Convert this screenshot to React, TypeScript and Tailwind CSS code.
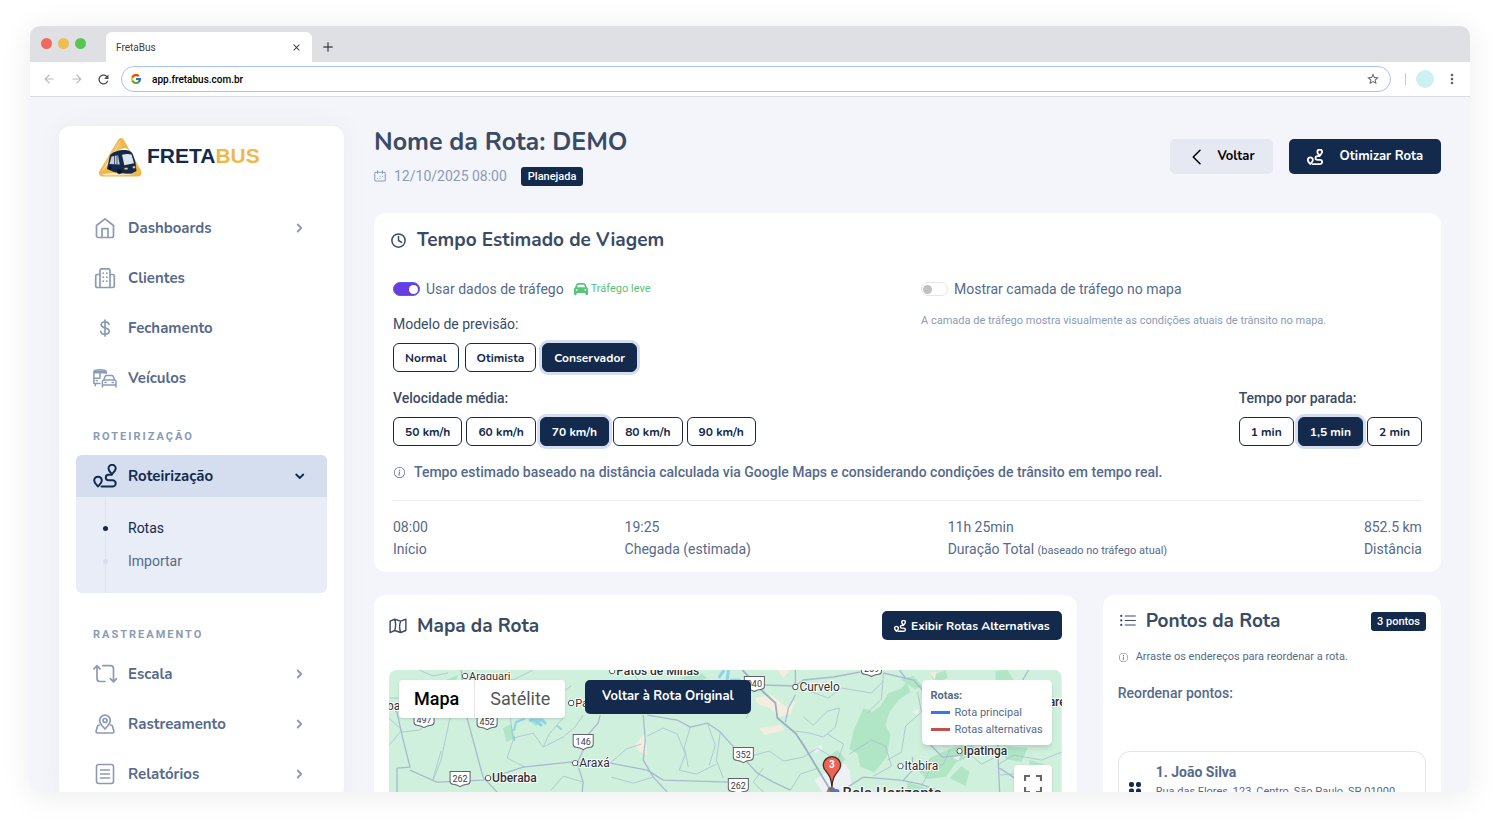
import { useState, type ReactNode } from "react";
import { BsInfoCircle, BsListUl } from "react-icons/bs";
import { FaCar } from "react-icons/fa6";
import { FcGoogle } from "react-icons/fc";
import {
  MdAdd,
  MdArrowBack,
  MdArrowForward,
  MdClose,
  MdMoreVert,
  MdRefresh,
  MdStarOutline,
} from "react-icons/md";

type IconProps = { className?: string };

function Stroke({
  className = "",
  width = 1.7,
  children,
}: IconProps & { width?: number; children: ReactNode }) {
  return (
    <svg
      viewBox="0 0 24 24"
      fill="none"
      stroke="currentColor"
      strokeWidth={width}
      strokeLinecap="round"
      strokeLinejoin="round"
      className={`shrink-0 ${className}`}
      aria-hidden="true"
    >
      {children}
    </svg>
  );
}

function RouteIcon({ className = "size-6", width = 2 }: IconProps & { width?: number }) {
  return (
    <Stroke className={className} width={width}>
      <path d="M5 22.500c-1.600-2-3.800-3.700-3.800-6a3.800 3.800 0 0 1 7.600 0c0 2.300-2.200 4-3.800 6Z" />
      <path d="M19 10.300c-1.300-2-3.500-3.700-3.500-5.900a3.600 3.600 0 0 1 7.200 0c0 2.200-2.400 3.900-3.700 5.900Z" />
      <path d="M18.500 10.800h-3a2.700 2.700 0 0 0 0 5.400h4a3.200 3.200 0 0 1 0 6.400H8.500" />
    </Stroke>
  );
}

function HomeIcon() {
  return (
    <Stroke className="size-6">
      <path d="M3.500 9.500 12 2.800l8.500 6.700v10.300a1.700 1.700 0 0 1-1.700 1.700H5.200a1.700 1.700 0 0 1-1.700-1.700Z" />
      <path d="M9 21.300v-8.600h6v8.600" />
    </Stroke>
  );
}

function BuildingIcon() {
  return (
    <Stroke className="size-6">
      <path d="M7 21.500V4.500a1.600 1.600 0 0 1 1.600-1.600h6.800A1.600 1.600 0 0 1 17 4.500v17M7 8.500H4.300a1.600 1.600 0 0 0-1.600 1.600v9.800a1.600 1.600 0 0 0 1.600 1.600h15.400a1.600 1.600 0 0 0 1.600-1.600v-9.800a1.600 1.600 0 0 0-1.600-1.600H17" />
      <path d="M10.200 7.200h.1M13.800 7.200h.1M10.200 11.200h.1M13.800 11.200h.1M10.200 15.200h.1M13.800 15.200h.1" />
    </Stroke>
  );
}

function DollarIcon() {
  return (
    <Stroke className="size-6" width={1.700}>
      <path d="M12 4v16M16 8.300C15.700 6.800 14.200 5.900 12 5.900c-2.300 0-3.900 1.100-3.900 2.900 0 4.200 8.100 2 8.100 6.300 0 1.900-1.700 3.100-4.200 3.100-2.400 0-4-1.100-4.300-2.900" />
    </Stroke>
  );
}

function VehiclesIcon() {
  return (
    <Stroke className="size-6" width={1.500}>
      <path d="M.900 17.500V5.500C2.500 3.300 11.500 3.300 13.300 5.500v1.800M.900 6.700h12.400M.900 12.200h6M7 6.700v4.600M.900 17.500h6M2.300 17.500v2.200M3.200 14.800h1" />
      <path d="M2.200 5.400h9.800" strokeWidth="1.800" />
      <path d="m10.700 14 1.500-3.700a1.500 1.500 0 0 1 1.400-.9h5.200a1.500 1.500 0 0 1 1.400.9l1.500 3.700M9.400 19v-3.400A1.600 1.600 0 0 1 11 14h10.400a1.600 1.600 0 0 1 1.600 1.600V19ZM9.400 19v2M23 19v2M12 16.500h1.200M19.200 16.500h1.200" />
    </Stroke>
  );
}

function ScaleIcon() {
  return (
    <Stroke className="size-6">
      <path d="M.900 6.800 4 3.700l3.100 3.100M4 4v12.500a3 3 0 0 0 3 3h5" />
      <path d="M9.800 3.700h7.700a3 3 0 0 1 3 3v13M17.300 16.700l3.200 3.100 3-3.100" />
    </Stroke>
  );
}

function PinMapIcon() {
  return (
    <Stroke className="size-6">
      <path d="M12 17c-2-2.500-5.300-5.100-5.300-8.600a5.300 5.300 0 0 1 10.600 0C17.300 11.900 14 14.500 12 17Z" />
      <circle cx="12" cy="8.500" r="2" />
      <path d="M6.500 13H6a1.500 1.500 0 0 0-1.400 1l-1.500 5a1.500 1.500 0 0 0 1.400 2h15a1.500 1.500 0 0 0 1.400-2l-1.500-5a1.500 1.500 0 0 0-1.400-1h-.5" />
    </Stroke>
  );
}

function ReportIcon() {
  return (
    <Stroke className="size-6" width={1.600}>
      <rect x="3.500" y="2.500" width="17" height="19" rx="2.200" />
      <path d="M7.500 8h9M7.500 12h9M7.500 16h9" />
    </Stroke>
  );
}

function ClockIcon() {
  return (
    <Stroke className="size-[15px]" width={2.400}>
      <circle cx="12" cy="12" r="10.600" />
      <path d="M12 5.500V12l5 3" />
    </Stroke>
  );
}

function FoldedMapIcon() {
  return (
    <Stroke className="size-[18px]" width={1.900}>
      <path d="M1.500 5.500 7.500 3l8 2.500L22.500 3v15l-7 2.700-8-2.700-6 2.700ZM7.500 3c1.800 5 1.800 10 0 15M15.500 5.500c-1.800 5-1.800 10 0 15" />
    </Stroke>
  );
}

function CalendarIcon() {
  return (
    <Stroke className="size-3" width={2.100}>
      <path d="M3.500 4.500h17A2 2 0 0 1 22.500 6.500V20a2 2 0 0 1-2 2h-17a2 2 0 0 1-2-2V6.500A2 2 0 0 1 3.500 4.500ZM7 1.500v5M17 1.500v5" />
      <path d="M12 12.500h.1M17 12.500h.1M7 17h.1M12 17h.1" strokeWidth="2.200" />
    </Stroke>
  );
}

function Chevron({ open = false }: { open?: boolean }) {
  return (
    <Stroke className="size-3" width={3.600}>
      {open ? <path d="m4.500 9 7 7 7-7" /> : <path d="m7.500 5 7 7-7 7" />}
    </Stroke>
  );
}

function Logo() {
  return (
    <a href="/" className="flex items-start gap-[5px]">
      <svg viewBox="0 0 44 40" className="h-10 w-11" aria-hidden="true">
        <path d="M20 3C21.500.200 24.500.200 26 3L43 33.500c1.500 3-.2 6-3.300 6H4.500C1.200 39.500.200 36.500 1.500 34Z" fill="#edb84c" />
        <path d="M22.500 4.500 24 9l-8 9L8 31l-6 4.500L7 26 18 7c1.800-2.800 3-3.500 4.500-2.500Z" fill="#f0c160" />
        <path d="M23.500 1.500 19 11l-8.500 15L4 34.500l5-7.700L16 15.500c3-5 5-9 7.500-14Z" fill="#fff" />
        <path d="M17 17c3-5 9-7 13-5l2 3-15 4Z" fill="#fff" />
        <path d="M12 18c4-4 14-6.500 20-3.800 3 1.300 3.500 5 5.500 11.300l1 8.500-5 2.500-13 .5L9 32Z" fill="#132a4d" />
        <path d="M13.500 19.500 20 18.300l1.700 9.200-10.200-.6Z" fill="#c6ced9" />
        <path d="M16.500 18.800v8.400M19 18.400v8.800" stroke="#132a4d" strokeWidth="0.7" />
        <path d="M24 17.800c4-.9 7-.9 9.500-.2l2.500 8.600-9.700 2Z" fill="#dde4ec" />
        <path d="m3.500 37 15-1.500 18 2.500-30 .6Z" fill="#f9e6b5" />
        <path d="M26.500 31.600h3.200M34.700 30.300h2.600" stroke="#ffc75a" strokeWidth="1.900" />
        <circle cx="21.500" cy="34.500" r="2.500" fill="#0a1629" />
        <circle cx="12" cy="30.800" r="1.800" fill="#0a1629" />
      </svg>
      <span className="mt-[7px] font-['Liberation_Sans',sans-serif] text-[21px] font-bold leading-6 text-[#132a4d]">
        FRETA<span className="text-[#edb84c]">BUS</span>
      </span>
    </a>
  );
}

const mainItems = [
  { label: "Dashboards", icon: <HomeIcon />, hasChildren: true },
  { label: "Clientes", icon: <BuildingIcon />, hasChildren: false },
  { label: "Fechamento", icon: <DollarIcon />, hasChildren: false },
  { label: "Veículos", icon: <VehiclesIcon />, hasChildren: false },
];

const trackingItems = [
  { label: "Escala", icon: <ScaleIcon />, hasChildren: true },
  { label: "Rastreamento", icon: <PinMapIcon />, hasChildren: true },
  { label: "Relatórios", icon: <ReportIcon />, hasChildren: true },
];

function NavItem({ label, icon, hasChildren }: (typeof mainItems)[number]) {
  return (
    <li>
      <a href="#" className="flex h-[50px] items-center gap-[11px] pl-[17px] pr-[21px] text-[#8a9bb8]">
        {icon}
        <span className="flex-1 font-['Nunito','Open_Sans',sans-serif] text-[15px] font-bold text-[#566a8c]">
          {label}
        </span>
        {hasChildren && <Chevron />}
      </a>
    </li>
  );
}

function Sidebar() {
  return (
    <aside className="w-[285px] shrink-0 rounded-xl bg-white px-[17px] shadow-[0_0_24px_rgba(80,100,150,0.06)]">
      <div className="h-[77px] pl-[22px] pt-[11px]">
        <Logo />
      </div>
      <nav>
        <ul>
          {mainItems.map((item) => (
            <NavItem key={item.label} {...item} />
          ))}
        </ul>

        <h2 className="mt-6 pl-[17px] text-[11px] font-bold uppercase leading-5 tracking-[2px] text-[#8a9bb8]">
          Roteirização
        </h2>
        <div className="mt-2 overflow-hidden rounded-md bg-[#e8edf7]">
          <button
            type="button"
            aria-expanded="true"
            className="flex h-[42px] w-full items-center gap-[11px] bg-[#d4deef] pl-[17px] pr-[21px] text-left text-[#132a4d]"
          >
            <RouteIcon />
            <span className="flex-1 font-['Nunito','Open_Sans',sans-serif] text-[15px] font-bold">
              Roteirização
            </span>
            <Chevron open />
          </button>
          <ul className="ml-[29px] border-l border-[#dce4f2] py-[15px] text-sm">
            <li className="relative pl-[22px] leading-[33px] text-[#132a4d]">
              <span className="absolute -left-[3px] top-3.5 size-[5px] rounded-full bg-[#132a4d]" />
              <a href="#">Rotas</a>
            </li>
            <li className="relative pl-[22px] leading-[33px] text-[#566a8c]">
              <span className="absolute -left-[3px] top-3.5 size-[5px] rounded-full bg-[#d4deef]" />
              <a href="#">Importar</a>
            </li>
          </ul>
        </div>

        <h2 className="mt-8 pl-[17px] text-[11px] font-bold uppercase leading-5 tracking-[2px] text-[#8a9bb8]">
          Rastreamento
        </h2>
        <ul className="mt-1">
          {trackingItems.map((item) => (
            <NavItem key={item.label} {...item} />
          ))}
        </ul>
      </nav>
    </aside>
  );
}

function ChoiceGroup({
  label,
  options,
  initial,
  gap,
}: {
  label: string;
  options: string[];
  initial: string;
  gap: string;
}) {
  const [selected, setSelected] = useState(initial);
  return (
    <div role="group" aria-label={label} className={`flex ${gap}`}>
      {options.map((option) => (
        <button
          key={option}
          type="button"
          aria-pressed={option === selected}
          onClick={() => setSelected(option)}
          className={`h-[29px] rounded-md border border-[#132a4d] px-[11px] font-['Nunito','Open_Sans',sans-serif] text-xs font-bold ${
            option === selected
              ? "bg-[#132a4d] text-white ring-3 ring-[#d4deef]"
              : "bg-white text-[#132a4d]"
          }`}
        >
          {option}
        </button>
      ))}
    </div>
  );
}

function Toggle({ id, label, on = false }: { id: string; label: string; on?: boolean }) {
  return (
    <>
      <input
        id={id}
        type="checkbox"
        role="switch"
        defaultChecked={on}
        className="flex h-3.5 w-[27px] appearance-none items-center rounded-full border border-[#e2e5ec] bg-white px-px before:size-[9px] before:rounded-full before:bg-[#bfc1c4] checked:justify-end checked:border-[#5a5cf0] checked:bg-[#6a3de0] checked:before:bg-white"
      />
      <label htmlFor={id} className="ml-1.5 text-sm text-[#566a8c]">
        {label}
      </label>
    </>
  );
}

const stats = [
  { value: "08:00", label: "Início" },
  { value: "19:25", label: "Chegada (estimada)" },
  { value: "11h 25min", label: "Duração Total", note: "(baseado no tráfego atual)" },
  { value: "852.5 km", label: "Distância" },
];

function TravelTimeCard() {
  return (
    <section className="mt-[27px] rounded-xl bg-white px-[19px] pb-3 pt-[15px]">
      <h2 className="-ml-0.5 flex h-6 items-center gap-[11px] font-['Nunito','Open_Sans',sans-serif] text-[19px] font-bold text-[#3a4b66]">
        <ClockIcon />
        Tempo Estimado de Viagem
      </h2>

      <div className="mt-[27px] grid grid-cols-2 gap-[27px]">
        <div>
          <div className="flex h-5 items-center">
            <Toggle id="traffic-data" label="Usar dados de tráfego" on />
            <span className="ml-2.5 flex items-end gap-[3px] text-[11px] leading-3.5 text-[#56c47b]">
              <FaCar className="size-3.5" />
              Tráfego leve
            </span>
          </div>
          <p className="mb-[9px] mt-[15px] text-sm leading-5 text-[#3a4b66]">Modelo de previsão:</p>
          <ChoiceGroup
            label="Modelo de previsão"
            options={["Normal", "Otimista", "Conservador"]}
            initial="Conservador"
            gap="gap-1.5"
          />
        </div>
        <div>
          <div className="flex h-5 items-center">
            <Toggle id="traffic-layer" label="Mostrar camada de tráfego no mapa" />
          </div>
          <p className="mt-3 text-[11px] leading-5 text-[#8a9bb8]">
            A camada de tráfego mostra visualmente as condições atuais de trânsito no mapa.
          </p>
        </div>
      </div>

      <div className="mt-4 flex justify-between">
        <div>
          <p className="mb-[9px] text-sm font-medium leading-5 text-[#3a4b66]">Velocidade média:</p>
          <ChoiceGroup
            label="Velocidade média"
            options={["50 km/h", "60 km/h", "70 km/h", "80 km/h", "90 km/h"]}
            initial="70 km/h"
            gap="gap-1"
          />
        </div>
        <div>
          <p className="mb-[9px] text-sm font-medium leading-5 text-[#3a4b66]">Tempo por parada:</p>
          <ChoiceGroup
            label="Tempo por parada"
            options={["1 min", "1,5 min", "2 min"]}
            initial="1,5 min"
            gap="gap-1"
          />
        </div>
      </div>

      <p className="mt-4 flex h-5 items-center gap-2 text-sm font-medium text-[#566a8c]">
        <BsInfoCircle className="mx-px size-[11px]" />
        Tempo estimado baseado na distância calculada via Google Maps e considerando condições de
        trânsito em tempo real.
      </p>

      <dl className="mt-[18px] flex justify-between border-t border-[#eceef2] pt-[15px] text-sm leading-[22px] text-[#566a8c]">
        {stats.map((stat) => (
          <div key={stat.label} className="flex flex-col-reverse">
            <dt>
              {stat.label} {stat.note && <small className="text-[11px] leading-4">{stat.note}</small>}
            </dt>
            <dd>{stat.value}</dd>
          </div>
        ))}
      </dl>
    </section>
  );
}

const shields = [
  { n: "497", x: 35, y: 49 },
  { n: "452", x: 98, y: 51 },
  { n: "146", x: 194, y: 71 },
  { n: "262", x: 71, y: 108 },
  { n: "040", x: 365, y: 13 },
  { n: "352", x: 354, y: 84 },
  { n: "262", x: 349, y: 115 },
  { n: "259", x: 482, y: -2 },
];

const towns = [
  { name: "Araguari", x: 76, y: 6, size: 11, weight: 400 },
  { name: "Patos de Minas", x: 223, y: 1, size: 12, weight: 500 },
  { name: "Patrocínio", x: 182, y: 33, size: 11, weight: 400 },
  { name: "Araxá", x: 186, y: 93, size: 12, weight: 400 },
  { name: "Uberaba", x: 99, y: 108, size: 12, weight: 500 },
  { name: "Curvelo", x: 406, y: 17, size: 12, weight: 400 },
  { name: "Itabira", x: 511, y: 96, size: 12, weight: 400 },
  { name: "Ipatinga", x: 570, y: 81, size: 12, weight: 500 },
];

function RouteMap() {
  return (
    <svg
      viewBox="0 0 672 400"
      preserveAspectRatio="xMinYMin slice"
      className="block w-full font-['Roboto',sans-serif]"
      role="img"
      aria-label="Mapa da rota"
    >
      <rect width="672" height="400" fill="#cff0dc" />
      <g fill="#b0e5c6">
        <path d="m474 38 9 4 8-6 8-13 12-4 6-7 4 10-12 8-9 12-4 13 5 10-4 22-12 15-14-5-3-14-8-4 4-18Z" />
        <path d="m606 1 12-1 7 12 22 6 2 14-18-8-14-4-11-8ZM511 9l13-3 10 11-9 2ZM528 100l14-13 18-8 20-6 10 8-24 12-10 14-19 2ZM440 86l8-6 8 9-6 7-10-1ZM518 112l24 8-4 10h-22ZM560 108l12-12 8 6-4 14ZM614 76l24 2-6 14-16-3ZM57 10l12-5-2 5ZM114 58l8-4 4 14-9 4ZM140 51l14-1-7 6ZM290 8l20-6 8 6-10 5ZM542 6l14-6 2 8-12 5ZM640 90l14 4-3 12-12-4Z" />
      </g>
      <g fill="#f5eee0">
        <path d="m366 28 16-3 15 12 10-7-6 14-12 3-8-9-13-4ZM370 58l22-3 3 5-20 5ZM388 0h12l-6 8ZM541 2h6l-2 8ZM245 76l11-13 2 22-7-3Z" />
      </g>
      <g fill="#eef1f3">
        <path d="m424 79 8-4 1 4-7 4ZM450 100l5-7 5 7 2 14-9 8h-20l-8-12 10-7ZM563 88l8-3-2 5ZM523 42l6-3-1 6Z" />
      </g>
      <g fill="none" stroke="#8dd3ea" strokeWidth="2" strokeLinecap="round">
        <path d="m125 60 2-8 8-3M125 67v3M168 56l4 3" />
        <path d="M141 50h12l3 3M147 52l5 3" strokeWidth="3" />
        <path d="m330 7 4-6M338 9l1-8M342 10h8" strokeWidth="3" />
      </g>
      <g fill="none" stroke="#a9bfd0" strokeWidth="0.8">
        <path d="M0 48 13 60 0 75M13 62l18-2 12-14 16-25M61 48l-4 18-5 24-8 20M52 81l-8 28M121 45l3 25-6 18 18 9M124 68l20-5 10 14 20-10 12-10 8-12M154 77l6-13 14-16M221 93l16-14 15-5M258 66l16-8 14 6 8 20-6 16 17 4 20-10M301 57l-6 20 4 20M318 53l8 22-6 20M264 107l-20 6-22-6M194 112l-20-6-12 14" />
        <path d="M414 47l10 8 14-14 12-3-4 19-12 10-14-4-14-2M438 64l16 10-6 18M331 62l-4 28 7 18M354 88l26-7 14 10 20-4 14-9 10 6 12 8M374 98l-10 14 10 10M401 120l10-16 18-6M460 84l22-14 14 6 6 20-18 10M494 3l-2 26-14 14M528 22l4 20-16 14-4 26-14 8M548 20l10 24 14-6 8 14-7 17M560 80l-6 14-14 6-8 16M580 84l12 10 12-6M608 95l16-10 28 5 20-8M610 105l24-2 12 14" />
        <path d="M0 28h12M144 0l-20 10-20-4M30 0l14 6 15-3M162 30l20-14M242 0l8 12 20-2M336 34l-20-6-22 8M417 20l22 8 13-10 30 5 12-12M350 36l10 4-3 8" />
      </g>
      <g fill="none" stroke="#a8bacf" strokeWidth="1.300" strokeLinejoin="round">
        <path d="M0 34 8 42 13 65l8 32-13 1v24M21 100l27 12 46-2 40-13 47-5 40 1 37 7 16 10 67 2" />
        <path d="m72 0 6 48 16 59 14 15M211 45l-2 8-15 17v10l-6 13 6 19-1 10M254 45l2 25-2 20 10 17 14 15M258 45l30 5 13 7 17-4 13 9 23 26 14 15 16 9 17 8" />
        <path d="m374 15 32 1 8-6 30-3 27-5M406 16l0-16M406 25l-7 13-3 14M458 117l16-10 37 3 20 4 22 8M494 3l30 7 9 10v10M523 87v13l-9 10M541 75l12 12 20-2 10-8M608 73l2 49M510 0l6 8 8 2M610 98l30 20M639 0l-6 10" />
      </g>
      <path d="m353 0 21 22 12 11 2 15 18 15 8 12 27 45" fill="none" stroke="#9aaec5" strokeWidth="1.800" />
      {shields.map((s, i) => (
        <g key={i} transform={`translate(${s.x} ${s.y})`}>
          <path
            d="M-10-6.500h20v9.500q0 3-3 3.200Q3 6.500 0 8.500-3 6.500-7 6.200-10 6-10 3Z"
            fill="#fff"
            stroke="#5f6368"
            strokeWidth="1"
          />
          <text y="4" textAnchor="middle" fontSize="9" fill="#3c4043">
            {s.n}
          </text>
        </g>
      ))}
      <g fill="#2e3134" stroke="#fff" strokeWidth="2" paintOrder="stroke" strokeLinejoin="round">
        {towns.map((t) => (
          <g key={t.name}>
            <circle cx={t.x} cy={t.y} r="2.300" fill="#fff" stroke="#2e3134" strokeWidth="1.300" />
            <text x={t.x + 4} y={t.y + 4} fontSize={t.size} fontWeight={t.weight}>
              {t.name}
            </text>
          </g>
        ))}
        <text x="-2" y="40" fontSize="12">ba</text>
        <text x="659" y="36" fontSize="12" fontWeight="500">
          ares
        </text>
        <text x="453" y="128" fontSize="15" fontWeight="500">
          Belo Horizonte
        </text>
      </g>
      <circle cx="442" cy="121" r="4" fill="#6b7280" />
      <circle cx="439" cy="122" r="2" fill="#e96356" />
      <circle cx="447" cy="122" r="3" fill="#4c6ef5" />
      <path
        d="M442.500 117c-.6-9-2.500-11.500-5.500-15.300a8.600 8.600 0 1 1 11 0c-3 3.800-4.900 6.300-5.500 15.300Z"
        fill="#ea6557"
        stroke="#4b2521"
        strokeWidth="1.300"
      />
      <text x="442.500" y="98" textAnchor="middle" fontSize="10" fontWeight="700" fill="#fff">
        3
      </text>
    </svg>
  );
}

function MapCard() {
  return (
    <section className="col-span-8 rounded-xl bg-white px-[15px] py-4">
      <div className="flex items-center justify-between">
        <h2 className="flex items-center gap-2.5 font-['Nunito','Open_Sans',sans-serif] text-[19px] font-bold leading-6 text-[#3a4b66]">
          <FoldedMapIcon />
          Mapa da Rota
        </h2>
        <button
          type="button"
          className="flex h-[29px] items-center gap-[5px] rounded-[5px] bg-[#132a4d] px-3 font-['Nunito','Open_Sans',sans-serif] text-xs font-bold text-white"
        >
          <RouteIcon className="size-3" width={2.800} />
          Exibir Rotas Alternativas
        </button>
      </div>
      <div className="relative mt-[30px] overflow-hidden rounded-lg">
        <RouteMap />
        <div className="absolute left-2.5 top-2.5 flex h-[38px] items-center divide-x divide-[#e6e6e6] rounded-sm bg-white text-lg shadow-sm">
          <button type="button" className="h-full px-[15px] font-medium text-black">
            Mapa
          </button>
          <button type="button" className="h-full px-[15px] text-[#565656]">
            Satélite
          </button>
        </div>
        <button
          type="button"
          className="absolute left-[196px] top-2.5 h-[34px] rounded-[5px] bg-[#132a4d] px-[17px] font-['Nunito','Open_Sans',sans-serif] text-[13px] font-bold text-white"
        >
          Voltar à Rota Original
        </button>
        <div className="absolute right-2.5 top-2.5 rounded-[5px] bg-white px-[9px] py-[7px] text-[11px] leading-[17px] text-[#566a8c] shadow-md">
          <p className="font-bold">Rotas:</p>
          <p className="flex items-center gap-[5px]">
            <span className="h-[3px] w-[19px] bg-[#3674f5]" />
            Rota principal
          </p>
          <p className="flex items-center gap-[5px]">
            <span className="h-[3px] w-[19px] bg-[#c4504b]" />
            Rotas alternativas
          </p>
        </div>
        <button
          type="button"
          aria-label="Tela cheia"
          className="absolute right-2.5 top-[95px] flex size-[38px] items-center justify-center rounded-sm bg-white text-[#666] shadow-sm"
        >
          <svg viewBox="0 0 18 18" className="size-[18px]" fill="none" stroke="currentColor" strokeWidth="2.200">
            <path d="M1 6V1h5M12 1h5v5M17 12v5h-5M6 17H1v-5" />
          </svg>
        </button>
      </div>
    </section>
  );
}

function PointsCard() {
  return (
    <section className="col-span-4 rounded-xl bg-white px-[15px] py-3.5">
      <div className="flex h-6 items-center justify-between">
        <h2 className="flex items-center gap-2 font-['Nunito','Open_Sans',sans-serif] text-[19px] font-bold leading-6 text-[#3a4b66]">
          <BsListUl className="mx-px size-[18px]" />
          Pontos da Rota
        </h2>
        <span className="rounded-[3px] bg-[#132a4d] px-1.5 text-[11px] font-medium leading-[19px] text-white">
          3 pontos
        </span>
      </div>
      <p className="mt-3.5 flex h-5 items-center gap-[7px] text-[11px] text-[#566a8c]">
        <BsInfoCircle className="mx-px size-[9px]" />
        Arraste os endereços para reordenar a rota.
      </p>
      <p className="mt-4 text-sm font-medium leading-5 text-[#566a8c]">Reordenar pontos:</p>
      <ol className="mt-12">
        <li className="flex items-center gap-3.5 rounded-xl border border-[#e2e5ec] py-2.5 pl-[9px] pr-3 text-[#566a8c]">
          <svg viewBox="0 0 14 24" className="h-6 w-3.5 shrink-0 text-[#132a4d]" fill="currentColor" aria-hidden="true">
            <rect x="1" y="2" width="5" height="5" rx="2" />
            <rect x="8" y="2" width="5" height="5" rx="2" />
            <rect x="1" y="8.500" width="5" height="5" rx="2" />
            <rect x="8" y="8.500" width="5" height="5" rx="2" />
            <rect x="1" y="15" width="5" height="5" rx="2" />
            <rect x="8" y="15" width="5" height="5" rx="2" />
          </svg>
          <div className="min-w-0">
            <p className="text-sm font-bold leading-5">1. João Silva</p>
            <p className="min-h-10 text-[11px] leading-5">
              Rua das Flores, 123, Centro, São Paulo, SP 01000
            </p>
          </div>
        </li>
      </ol>
    </section>
  );
}

function BrowserBar() {
  return (
    <header>
      <div className="flex h-9 items-end bg-[#dee0e4] pl-[11px]">
        <div className="mb-[13px] flex gap-1.5">
          <span className="size-[11px] rounded-full bg-[#ee6a5f]" />
          <span className="size-[11px] rounded-full bg-[#f0bd50]" />
          <span className="size-[11px] rounded-full bg-[#5bc454]" />
        </div>
        <div className="ml-5 flex h-[30px] w-[206px] items-center justify-between rounded-t-md bg-white px-2.5 text-[10px] text-[#3c4043]">
          FretaBus
          <button type="button" aria-label="Fechar aba">
            <MdClose className="size-[11px]" />
          </button>
        </div>
        <button type="button" aria-label="Nova aba" className="mb-[7px] ml-2 text-[#4a4d51]">
          <MdAdd className="size-4" />
        </button>
      </div>
      <div className="flex h-[35px] items-center border-b border-[#d9dcdf] bg-white pl-3 pr-2.5 text-[#5f6368]">
        <button type="button" aria-label="Voltar página" className="text-[#b9bcc0]">
          <MdArrowBack className="size-3.5" />
        </button>
        <button type="button" aria-label="Avançar página" className="ml-3.5 text-[#b9bcc0]">
          <MdArrowForward className="size-3.5" />
        </button>
        <button type="button" aria-label="Recarregar" className="ml-3 text-[#4a4d51]">
          <MdRefresh className="size-[15px]" />
        </button>
        <div className="ml-2.5 flex h-[26px] flex-1 items-center rounded-full border border-[#a5c2f5] pl-2 pr-2.5">
          <FcGoogle className="size-3" />
          <input
            aria-label="Endereço"
            defaultValue="app.fretabus.com.br"
            className="ml-2.5 min-w-0 flex-1 text-[10px] font-medium text-black outline-none"
          />
          <MdStarOutline className="size-3.5" />
        </div>
        <span className="ml-3.5 h-3 w-px bg-[#c9ccd0]" />
        <span className="ml-2.5 size-[18px] rounded-full bg-[#cdf0f2]" />
        <button type="button" aria-label="Menu" className="ml-2.5">
          <MdMoreVert className="size-4" />
        </button>
      </div>
    </header>
  );
}

export default function App() {
  return (
    <div className="h-screen bg-white px-[30px] pb-[34px] pt-[26px] font-['Roboto',sans-serif]">
      <div className="flex h-full flex-col overflow-hidden rounded-[10px] bg-[#f4f5fa] shadow-[0_4px_32px_rgba(0,0,0,0.08)]">
        <BrowserBar />
        <div className="flex min-h-0 flex-1 items-start gap-[30px] overflow-hidden px-[29px] pt-[29px]">
          <Sidebar />
          <main className="min-w-0 flex-1">
            <div className="flex items-start justify-between">
              <div>
                <h1 className="font-['Nunito','Open_Sans',sans-serif] text-[25px] font-bold leading-8 text-[#3a4b66]">
                  Nome da Rota: DEMO
                </h1>
                <p className="mt-2 flex h-5 items-center text-sm text-[#8a9bb8]">
                  <CalendarIcon />
                  <time className="ml-2">12/10/2025 08:00</time>
                  <span className="ml-3.5 rounded-[3px] bg-[#132a4d] px-[7px] text-[11px] font-medium leading-[19px] text-white">
                    Planejada
                  </span>
                </p>
              </div>
              <div className="mt-[13px] flex gap-4 font-['Nunito','Open_Sans',sans-serif] text-[13px] font-bold">
                <button
                  type="button"
                  className="flex h-[35px] items-center gap-[11px] rounded-[5px] bg-[#e6e8f2] px-[18px] text-black"
                >
                  <Stroke className="size-[18px]" width={2}>
                    <path d="m16 3-9 9 9 9" />
                  </Stroke>
                  Voltar
                </button>
                <button
                  type="button"
                  className="flex h-[35px] items-center gap-[17px] rounded-[5px] bg-[#132a4d] px-[18px] text-white"
                >
                  <RouteIcon className="size-4" width={2.700} />
                  Otimizar Rota
                </button>
              </div>
            </div>
            <TravelTimeCard />
            <div className="mt-[23px] grid grid-cols-12 gap-[26px]">
              <MapCard />
              <PointsCard />
            </div>
          </main>
        </div>
      </div>
    </div>
  );
}
